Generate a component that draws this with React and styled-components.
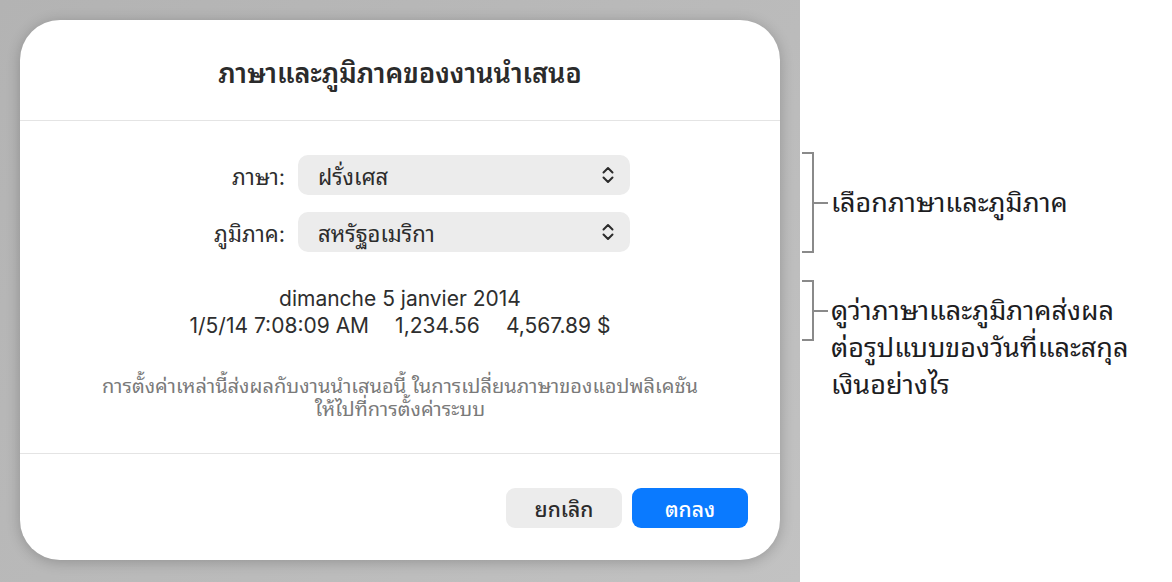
import React from 'react';
import styled, { createGlobalStyle } from 'styled-components';

const GlobalStyle = createGlobalStyle`
  html, body {
    margin: 0;
    padding: 0;
    background: #ffffff;
  }
  body {
    font-family: Inter, "Noto Sans Thai Looped", "Noto Sans Thai", sans-serif;
    -webkit-font-smoothing: antialiased;
  }
`;

const Page = styled.div`
  display: flex;
  width: 1172px;
  height: 582px;
  overflow: hidden;
`;

const Stage = styled.div`
  box-sizing: border-box;
  width: 800px;
  height: 582px;
  padding: 20px;
  background: linear-gradient(135deg, #b3b3b3 0%, #bbbbbb 60%, #c2c2c2 100%);
`;

const Dialog = styled.div`
  width: 760px;
  height: 540px;
  background: #ffffff;
  border-radius: 40px;
  box-shadow: 0 2px 14px rgba(0, 0, 0, 0.22);
  display: flex;
  flex-direction: column;
`;

const Header = styled.div`
  height: 100px;
  display: flex;
  align-items: center;
  justify-content: center;
  border-bottom: 1px solid #e4e4e4;
`;

const Title = styled.h1`
  margin: 0;
  font-size: 27px;
  font-weight: 600;
  color: #2b2b2b;
`;

const Body = styled.div`
  box-sizing: border-box;
  height: 333px;
  display: flex;
  flex-direction: column;
  padding-top: 34px;
  border-bottom: 1px solid #e4e4e4;
`;

const Form = styled.div`
  display: grid;
  grid-template-columns: 265px 332px;
  column-gap: 13px;
  row-gap: 17px;
  align-items: center;
`;

const Label = styled.div`
  text-align: right;
  font-size: 22px;
  color: #2e2e2e;
`;

const Popup = styled.div`
  box-sizing: border-box;
  height: 40px;
  border-radius: 10px;
  background: #ececec;
  display: flex;
  align-items: center;
  justify-content: space-between;
  padding: 0 16px 0 20px;
  font-size: 22px;
  color: #2b2b2b;
`;

const Preview = styled.div`
  margin-top: 33px;
  display: flex;
  flex-direction: column;
  align-items: center;
  font-size: 21px;
  line-height: 27px;
  color: #2e2e2e;
`;

const PreviewRow = styled.div`
  display: flex;
  gap: 26px;
`;

const Note = styled.p`
  margin: 36px 0 0;
  text-align: center;
  font-size: 20px;
  line-height: 23px;
  color: #7a7a7a;
`;

const Footer = styled.div`
  flex: 1;
  display: flex;
  justify-content: flex-end;
  align-items: flex-start;
  gap: 10px;
  padding: 34px 32px 0 0;
`;

const Button = styled.button`
  width: 116px;
  height: 40px;
  padding: 0 0 2px;
  border: none;
  border-radius: 9px;
  font-family: inherit;
  font-size: 21px;
  font-weight: 500;
  background: ${(p) => (p.primary ? '#0a7aff' : '#ececec')};
  color: ${(p) => (p.primary ? '#ffffff' : '#2b2b2b')};
`;

const Notes = styled.div`
  display: flex;
  flex-direction: column;
  padding: 152px 0 0 2px;
  gap: 27px;
`;

const Callout = styled.div`
  display: flex;
  align-items: flex-start;
`;

const Bracket = styled.div`
  position: relative;
  flex: none;
  box-sizing: border-box;
  width: 12px;
  height: ${(p) => p.h}px;
  border: 2px solid #8a8a8a;
  border-left: none;

  &::after {
    content: '';
    position: absolute;
    left: 10px;
    top: calc(50% - 1px);
    width: 16px;
    height: 2px;
    background: #8a8a8a;
  }
`;

const CalloutText = styled.div`
  margin-left: 17px;
  padding-top: ${(p) => p.offset}px;
  font-size: 27px;
  line-height: 37px;
  color: #1d1d1f;
  white-space: nowrap;
`;

function Chevrons() {
  return (
    <svg width="12" height="18" viewBox="0 0 12 18" fill="none">
      <path d="M1.5 6.5 L6 2 L10.5 6.5" stroke="#2b2b2b" strokeWidth="2" strokeLinecap="round" strokeLinejoin="round" />
      <path d="M1.5 11.5 L6 16 L10.5 11.5" stroke="#2b2b2b" strokeWidth="2" strokeLinecap="round" strokeLinejoin="round" />
    </svg>
  );
}

export default function App() {
  return (
    <Page>
      <GlobalStyle />
      <Stage>
        <Dialog>
          <Header>
            <Title>ภาษาและภูมิภาคของงานนำเสนอ</Title>
          </Header>
          <Body>
            <Form>
              <Label>ภาษา:</Label>
              <Popup>
                <span>ฝรั่งเศส</span>
                <Chevrons />
              </Popup>
              <Label>ภูมิภาค:</Label>
              <Popup>
                <span>สหรัฐอเมริกา</span>
                <Chevrons />
              </Popup>
            </Form>
            <Preview>
              <div>dimanche 5 janvier 2014</div>
              <PreviewRow>
                <span>1/5/14 7:08:09 AM</span>
                <span>1,234.56</span>
                <span>4,567.89 $</span>
              </PreviewRow>
            </Preview>
            <Note>
              การตั้งค่าเหล่านี้ส่งผลกับงานนำเสนอนี้ ในการเปลี่ยนภาษาของแอปพลิเคชัน
              <br />
              ให้ไปที่การตั้งค่าระบบ
            </Note>
          </Body>
          <Footer>
            <Button>ยกเลิก</Button>
            <Button primary>ตกลง</Button>
          </Footer>
        </Dialog>
      </Stage>
      <Notes>
        <Callout>
          <Bracket h={101} />
          <CalloutText offset={32}>เลือกภาษาและภูมิภาค</CalloutText>
        </Callout>
        <Callout>
          <Bracket h={61} />
          <CalloutText offset={12}>
            ดูว่าภาษาและภูมิภาคส่งผล
            <br />
            ต่อรูปแบบของวันที่และสกุล
            <br />
            เงินอย่างไร
          </CalloutText>
        </Callout>
      </Notes>
    </Page>
  );
}
